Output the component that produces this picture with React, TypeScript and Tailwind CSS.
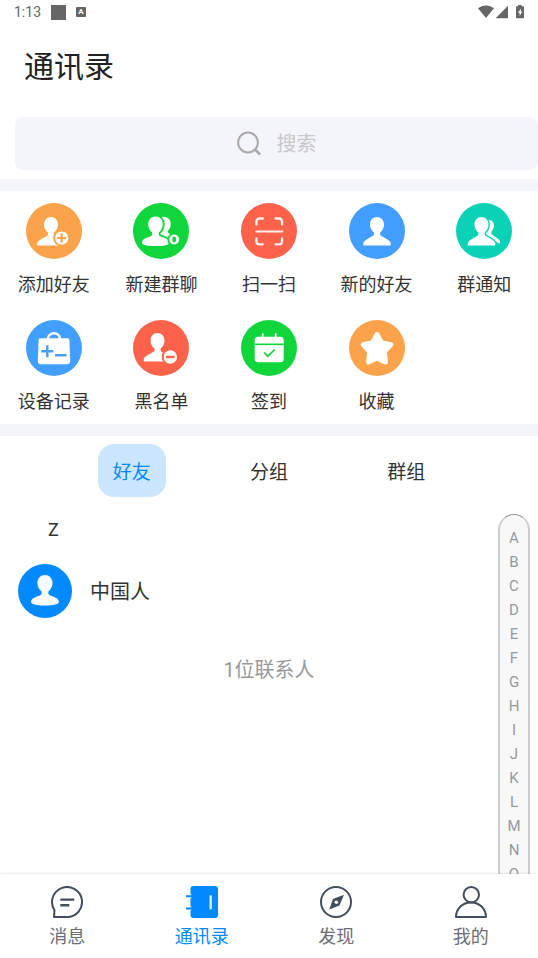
import { useState } from "react";
import type { ReactNode } from "react";

const ORANGE = "#fba34b";
const GREEN = "#10d63c";
const RED = "#fc634a";
const BLUE = "#439fff";
const TEAL = "#0bd2b6";

/* Head and shoulders, centred on x = 28 in a 56 unit box */
const PERSON =
  "M28 14c4 0 7 3 7 7.600 0 3.400-1.600 6.300-3.900 7.800v2.400c.6 1.800 8.800 4.200 10.200 7.400.5 1.200.7 1.800.4 2.800-.1.400-.4.600-.8.600H15.100c-.4 0-.7-.2-.8-.6-.3-1-.1-1.600.4-2.800 1.400-3.200 9.600-5.600 10.200-7.400v-2.400c-2.300-1.500-3.900-4.400-3.900-7.800 0-4.600 3-7.600 7-7.600z";

const PERSON_ROUND =
  "M28 13.500c4.200 0 7.300 3.200 7.300 7.700 0 3.600-1.800 6.500-4 8.300v2c0 1.700 2.700 2.200 5 3 3.200 1 5.200 2.700 5.200 4.900 0 2.600-5 3.600-13.500 3.600s-13.500-1-13.500-3.600c0-2.200 2-3.900 5.200-4.900 2.300-.8 5-1.300 5-3v-2c-2.200-1.800-4-4.700-4-8.300 0-4.500 3.100-7.700 7.300-7.700z";

function Disc({ color, children }: { color: string; children: ReactNode }) {
  return (
    <svg className="h-14 w-14" viewBox="0 0 56 56" fill="none" aria-hidden="true">
      <circle cx="28" cy="28" r="28" fill={color} />
      {children}
    </svg>
  );
}

const ACTIONS = [
  {
    label: "添加好友",
    icon: (
      <Disc color={ORANGE}>
        <path d={PERSON} fill="#fff" transform="translate(-3 0)" />
        <circle cx="35.7" cy="35" r="8.500" fill={ORANGE} />
        <path d="M32 41.500h12V44H32z" fill={ORANGE} />
        <circle cx="35.7" cy="35" r="6.600" fill="#fff" />
        <path d="M35.700 30.500v9M31.200 35h9" stroke={ORANGE} strokeWidth="2.200" />
      </Disc>
    ),
  },
  {
    label: "新建群聊",
    icon: (
      <Disc color={GREEN}>
        <path
          d="M29 14c5-.8 8.800 2.200 8.800 7 0 2.600-1.200 5-2.600 6.500-.9 1-.6 2 .6 2.800l3 1.700-3.500 3.500L27 31z"
          fill="#fff"
        />
        <path d={PERSON_ROUND} fill="#fff" stroke={GREEN} strokeWidth="3.600" paintOrder="stroke" transform="translate(-5.500 0)" />
        <circle cx="41.2" cy="36.500" r="6.800" fill={GREEN} />
        <circle cx="41.2" cy="36.500" r="5" fill="#fff" />
        <ellipse cx="41.2" cy="36.500" rx="1.800" ry="3" fill={GREEN} />
      </Disc>
    ),
  },
  {
    label: "扫一扫",
    icon: (
      <Disc color={RED}>
        <g stroke="#fff" strokeWidth="2.300" strokeLinecap="round" opacity=".9">
          <path d="M15.500 21.500v-3.200a2.800 2.800 0 0 1 2.800-2.800H22M34.500 15.500h3.700a2.800 2.800 0 0 1 2.800 2.800v3.200M41 35.500v3a2.800 2.800 0 0 1-2.800 2.800h-3.700M22 41.300h-3.700a2.800 2.800 0 0 1-2.800-2.800v-3" />
          <path d="M15.300 28.500h26" strokeWidth="2" />
        </g>
      </Disc>
    ),
  },
  {
    label: "新的好友",
    icon: (
      <Disc color={BLUE}>
        <path d={PERSON} fill="#fff" />
      </Disc>
    ),
  },
  {
    label: "群通知",
    icon: (
      <Disc color={TEAL}>
        <path
          d="M30 17c4.500-1 8 1.300 8 5.500 0 2.500-1 4.300-2.300 5.800-.8 1-.7 2 .2 3 2 2.200 7 4.300 8 6.700.5 1.400.1 2.500-.8 2.500L30 33z"
          fill="#fff"
        />
        <path d={PERSON} fill="#fff" stroke={TEAL} strokeWidth="2.800" paintOrder="stroke" transform="translate(-2.500 0)" />
      </Disc>
    ),
  },
  {
    label: "设备记录",
    icon: (
      <Disc color={BLUE}>
        <path d="M22 20v-1.500a6 5.200 0 0 1 12 0V20" stroke="#fff" strokeWidth="2.400" />
        <path
          d="M14.300 18.200h27.400c1 0 1.700.7 1.700 1.600l.8 21c.1 2-1.300 3.500-3.200 3.500H15c-1.900 0-3.300-1.500-3.200-3.500l.8-21c0-.9.700-1.600 1.700-1.600z"
          fill="#fff"
        />
        <path d="M21.300 25.300v12M15.300 31.300h12M29 35.300h11.500" stroke={BLUE} strokeWidth="2.400" />
      </Disc>
    ),
  },
  {
    label: "黑名单",
    icon: (
      <Disc color={RED}>
        <path d={PERSON} fill="#fff" transform="translate(-3.500 -1)" />
        <circle cx="37.3" cy="37" r="8.600" fill={RED} />
        <circle cx="37.3" cy="37" r="6.700" fill="#fff" />
        <path d="M33 37h8.600" stroke={RED} strokeWidth="2.400" />
      </Disc>
    ),
  },
  {
    label: "签到",
    icon: (
      <Disc color={GREEN}>
        <path d="M21.700 14v5M34.700 14v5" stroke="#fff" strokeWidth="1.800" strokeLinecap="round" />
        <rect x="13.700" y="16.700" width="29" height="25.500" rx="3.500" fill="#fff" />
        <path d="M13.700 24.300h29" stroke={GREEN} strokeWidth="1.600" />
        <path d="M23.200 32.500l3.600 3.700 7-6.700" stroke={GREEN} strokeWidth="1.700" />
      </Disc>
    ),
  },
  {
    label: "收藏",
    icon: (
      <Disc color={ORANGE}>
        <path
          d="M28 14.500l4.500 8.200 9.300 1.900-6.400 7 1 10.500-8.400-4-8.400 4 1-10.500-6.400-7 9.300-1.900z"
          fill="#fff"
          stroke="#fff"
          strokeWidth="5"
          strokeLinejoin="round"
        />
      </Disc>
    ),
  },
];

const TABS = ["好友", "分组", "群组"];

const LETTERS = "ABCDEFGHIJKLMNO".split("");

const NAV = [
  {
    label: "消息",
    icon: (
      <svg className="h-8 w-8" viewBox="0 0 32 32" fill="none" stroke="#434e5b" strokeWidth="2" aria-hidden="true">
        <path d="M16 31A15 15 0 1 0 3.500 24.200L3 31z" strokeLinejoin="round" />
        <path d="M9.300 13.600h14M9.300 19.300h9" strokeWidth="2.400" />
      </svg>
    ),
  },
  {
    label: "通讯录",
    icon: (
      <svg className="h-8 w-8" viewBox="0 0 32 32" fill="none" aria-hidden="true">
        <rect x="4.500" y="0" width="27.500" height="32" rx="3" fill="#0189ff" />
        <path d="M4.800 8v4.600M4.800 20.200v4.600" stroke="#fff" strokeWidth="1" />
        <path d="M0 10.300h6M0 22.500h6" stroke="#0189ff" strokeWidth="2" />
        <path d="M24.700 9.300v14" stroke="#d9edff" strokeWidth="2.400" />
      </svg>
    ),
  },
  {
    label: "发现",
    icon: (
      <svg className="h-8 w-8" viewBox="0 0 32 32" fill="none" aria-hidden="true">
        <circle cx="16" cy="16" r="15" stroke="#434e5b" strokeWidth="2" />
        <path d="M24 8.800L19.400 19.400 9.300 23.600 12.900 13z" fill="#434e5b" />
        <circle cx="16.300" cy="16.300" r="1.800" fill="#fff" />
      </svg>
    ),
  },
  {
    label: "我的",
    icon: (
      <svg className="h-8 w-8" viewBox="0 0 32 32" fill="none" stroke="#434e5b" strokeWidth="2" aria-hidden="true">
        <circle cx="16.300" cy="8.700" r="7.700" />
        <path d="M1 31c.2-8.500 6.500-14.500 15-14.500S30.800 22.500 31 31z" strokeLinejoin="round" />
      </svg>
    ),
  },
];

function StatusBar() {
  return (
    <div className="flex h-6 shrink-0 items-center justify-between pr-3 pl-[14px] text-[#666]">
      <div className="flex items-center gap-[10px]">
        <span className="text-sm leading-6">1:13</span>
        <span className="h-[15px] w-[15px] bg-[#666]" />
        <span className="flex h-[10px] w-[10px] items-center justify-center rounded-[1px] bg-[#666] text-[8px] font-bold text-white">
          A
        </span>
      </div>
      <svg className="h-[14px] w-12" viewBox="0 0 48 14" fill="#666" aria-hidden="true">
        <path d="M0 3.300C4.500-.6 11.500-.6 16 3.300L8 13z" />
        <path d="M30 .8v12.400H17.600z" />
        <path d="M40 1.300V0h3.500v1.300h1.800c.4 0 .7.300.7.700v10.500c0 .4-.3.700-.7.700h-6.600c-.4 0-.7-.3-.7-.7V2c0-.4.300-.7.700-.7z" />
        <path d="M43 3.500l-3 4.300h1.600v3.200l2.800-4.400h-1.700z" fill="#fff" />
      </svg>
    </div>
  );
}

export default function App() {
  const [tab, setTab] = useState("好友");
  const [page, setPage] = useState("通讯录");

  return (
    <div className="flex h-screen flex-col overflow-hidden bg-white font-[Roboto,'Noto_Sans_CJK_SC',sans-serif] text-[#333]">
      <StatusBar />

      <main className="flex min-h-0 flex-1 flex-col overflow-hidden">
        <h1 className="px-6 pt-5 pb-7 text-[30px] leading-[45px] text-[#222]">通讯录</h1>

        {/* Search */}
        <div className="pb-[9px] pl-[15px]">
          <label className="flex h-[53px] items-center justify-center gap-[14px] rounded-lg bg-[#f4f5fa]">
            <svg className="h-[26px] w-[26px]" viewBox="0 0 26 26" fill="none" stroke="#aaa" strokeWidth="2" aria-hidden="true">
              <circle cx="11" cy="11.500" r="9.900" />
              <path d="M18 18.500l5.200 5.200" strokeWidth="2.600" />
            </svg>
            <input
              type="text"
              aria-label="搜索"
              placeholder="搜索"
              className="w-10 bg-transparent text-xl outline-none placeholder:text-[#c8c8c8]"
            />
          </label>
        </div>

        <div className="h-3 shrink-0 bg-[#f4f5fa]" />

        {/* Shortcuts */}
        <div className="grid grid-cols-5 gap-y-[22px] pt-3 pb-[9px]">
          {ACTIONS.map((action) => (
            <button key={action.label} type="button" className="flex flex-col items-center gap-[13px]">
              {action.icon}
              <span className="text-lg leading-[26px] whitespace-nowrap">{action.label}</span>
            </button>
          ))}
        </div>

        <div className="h-3 shrink-0 bg-[#f4f5fa]" />

        <section className="relative min-h-0 flex-1 overflow-hidden pt-2">
          <div className="grid grid-cols-3 justify-items-center px-[63px]">
            {TABS.map((name) => (
              <button
                key={name}
                type="button"
                onClick={() => setTab(name)}
                className={`h-[53px] rounded-2xl px-[15px] pt-[6px] text-[19px] ${
                  tab === name ? "bg-[#cce6ff] text-[#0189ff]" : "text-[#333]"
                }`}
              >
                {name}
              </button>
            ))}
          </div>

          <h2 className="mt-[19px] px-12 text-lg leading-7">Z</h2>
          <a href="#contact" className="mt-5 flex items-center gap-[18px] px-[18px]">
            <svg className="h-[54px] w-[54px]" viewBox="0 0 56 56" aria-hidden="true">
              <circle cx="28" cy="28" r="28" fill="#0189ff" />
              <path d={PERSON_ROUND} fill="#f8fbfd" transform="translate(-2 -3) scale(1.070)" />
            </svg>
            <span className="pt-[2px] text-xl">中国人</span>
          </a>
          <p className="mt-[38px] text-center text-xl leading-7 text-[#999]">1位联系人</p>

          {/* Letter index, floats over the list and runs on under the nav */}
          <div className="absolute top-[78px] right-2 -bottom-6 flex w-8 flex-col items-center rounded-t-2xl border-x-2 border-t border-x-[#ccc] border-t-[#999] bg-[#f8f8f8] pt-[11px] text-[15px] text-[#999]">
            {LETTERS.map((letter) => (
              <button key={letter} type="button" className="h-6 w-full shrink-0 leading-6">
                {letter}
              </button>
            ))}
          </div>
        </section>
      </main>

      <nav className="relative grid shrink-0 grid-cols-4 bg-white pt-3 pb-2 shadow-[0_0_3px_rgba(0,0,0,0.15)]">
        {NAV.map((item) => (
          <button
            key={item.label}
            type="button"
            onClick={() => setPage(item.label)}
            className={`flex flex-col items-center gap-[6px] text-lg leading-[26px] ${
              page === item.label ? "text-[#0189ff]" : "text-[#6b6e75]"
            }`}
          >
            {item.icon}
            <span>{item.label}</span>
          </button>
        ))}
      </nav>
    </div>
  );
}
